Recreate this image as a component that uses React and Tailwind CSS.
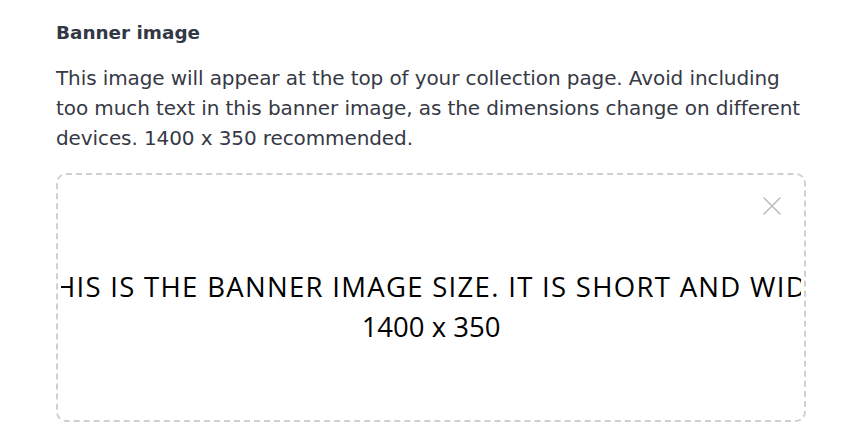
export default function App() {
  return (
    <div className="min-h-screen bg-white px-[56px] pt-[19px] font-['DejaVu_Sans',sans-serif] text-[#333845]">
      <h3 className="text-[18.4px] leading-[28px] font-semibold">Banner image</h3>
      <p className="mt-[16px] text-[20px] leading-[30px] tracking-[-0.1px] text-[#363945]">
        This image will appear at the top of your collection page. Avoid including too much
        text in this banner image, as the dimensions change on different devices. 1400 x 350
        recommended.
      </p>

      <div className="relative mt-[20px] h-[249px] rounded-[10px] border-2 border-dashed border-[#d0d0d0] px-[3px]">
        <div className="flex h-full flex-col items-center justify-center overflow-hidden pt-[19px] font-['Open_Sans',sans-serif] text-[27.5px] leading-[40px] text-black whitespace-nowrap">
          <span className="tracking-[1.3px]">THIS IS THE BANNER IMAGE SIZE. IT IS SHORT AND WIDE</span>
          <span>1400 x 350</span>
        </div>

        <button className="absolute right-[23px] top-[22px] p-0 text-[#bdbdbd]">
          <svg width="18" height="18" viewBox="0 0 18 18" fill="none" stroke="currentColor" strokeWidth="1.6" strokeLinecap="round">
            <path d="M1 1 L17 17 M17 1 L1 17" />
          </svg>
        </button>
      </div>
    </div>
  );
}
